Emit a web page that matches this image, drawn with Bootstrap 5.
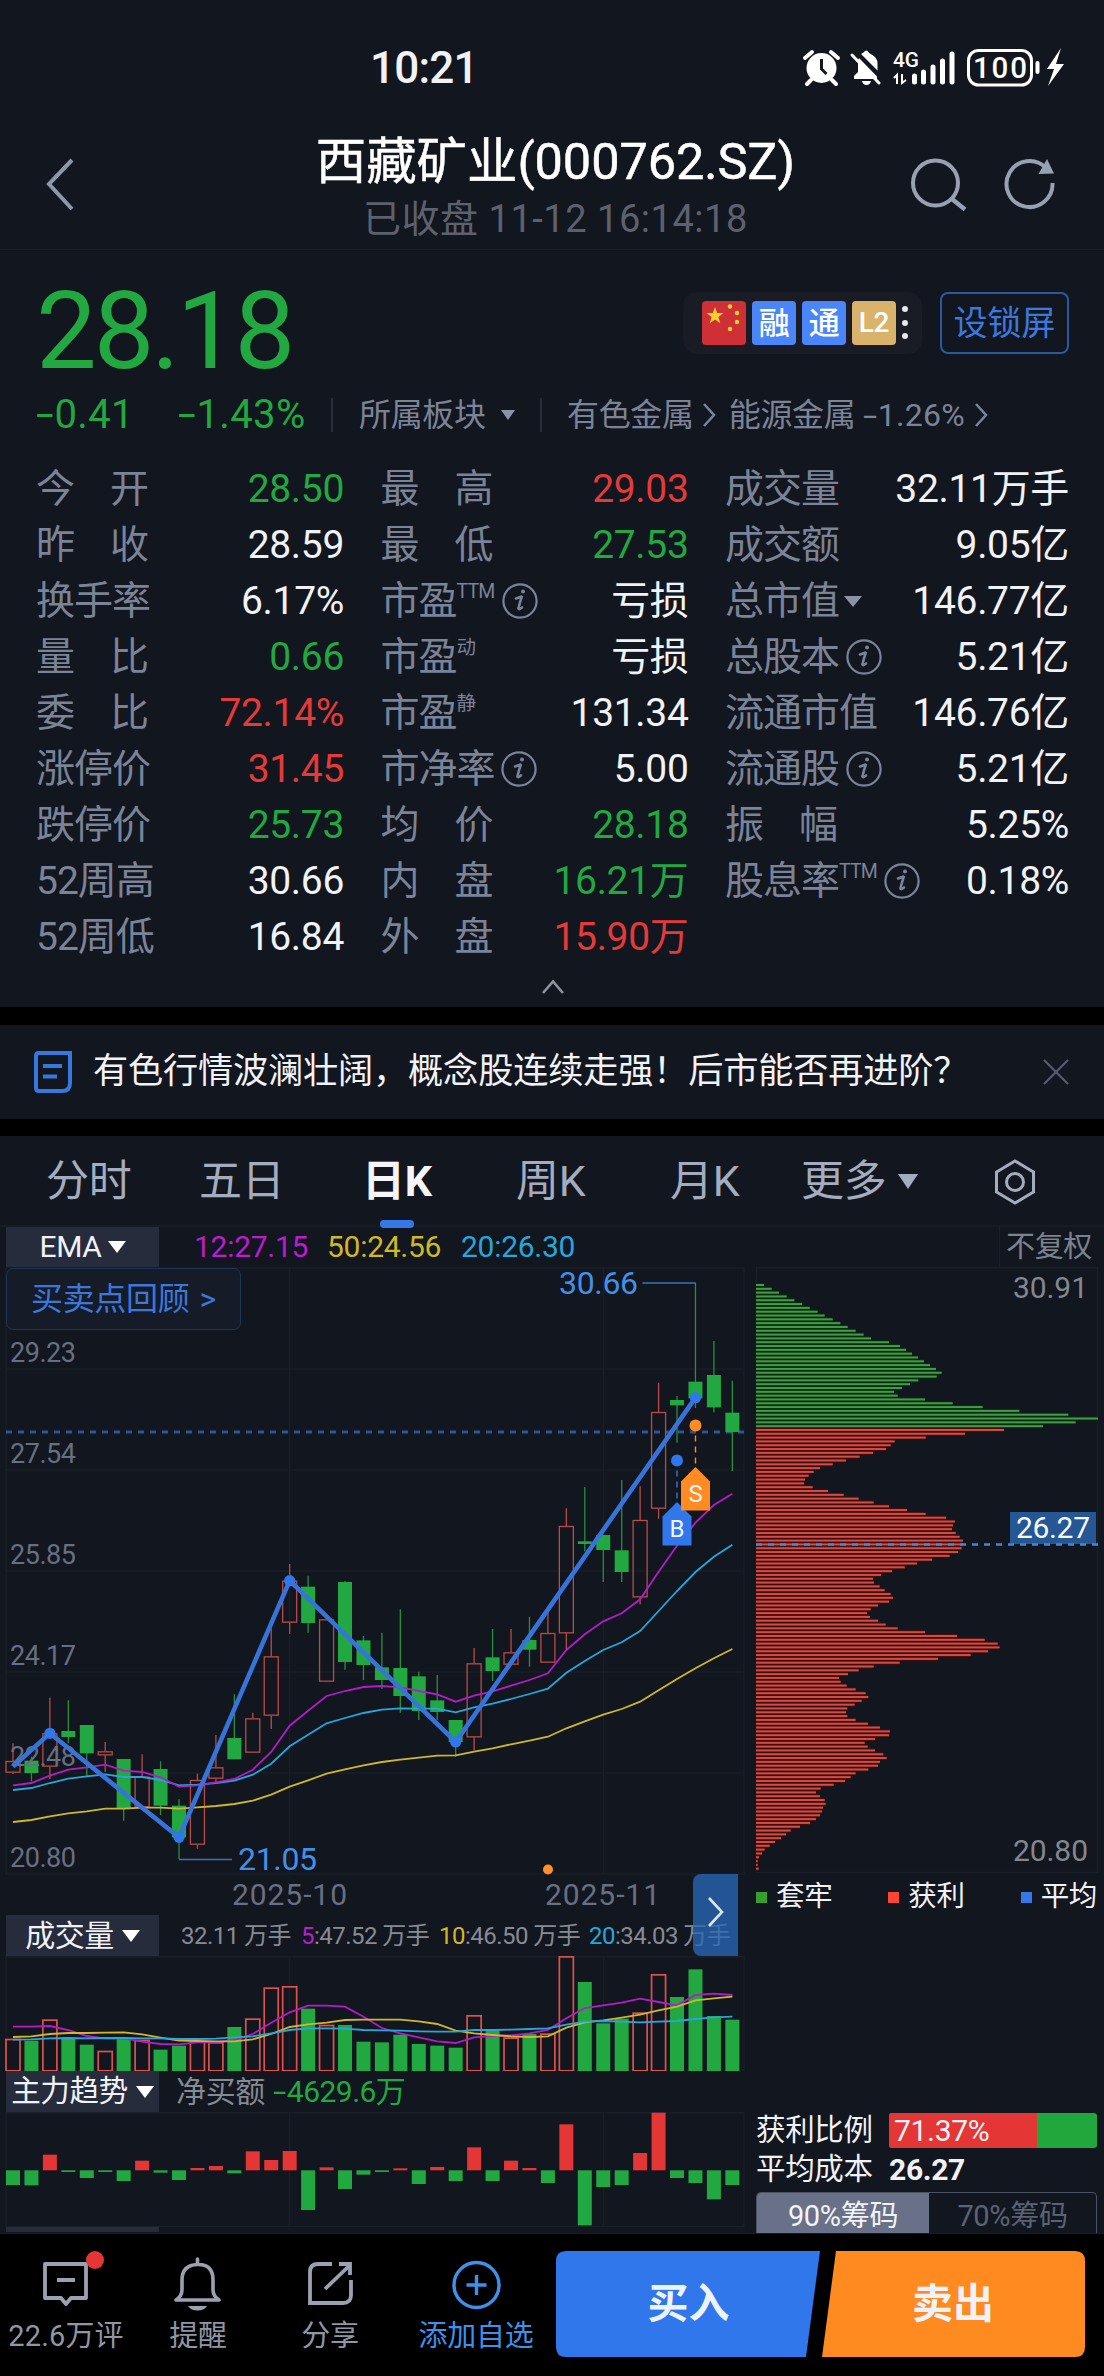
<!DOCTYPE html>
<html lang="zh-CN" data-bs-theme="dark">
<head>
<meta charset="utf-8">
<meta name="viewport" content="width=device-width, initial-scale=1">
<title>西藏矿业(000762.SZ)</title>
<link href="https://cdn.jsdelivr.net/npm/bootstrap@5.3.0/dist/css/bootstrap.min.css" rel="stylesheet">
<style>
:root{--panel:#12161e;--up:#e43a39;--down:#22a840;--lab:#7b8398;--dim:#646b7d;--blue:#3478e8;--line:#1b1f28}
body{width:1104px;height:2376px;overflow:hidden;background:#000;color:#f1f2f6;font-family:Roboto,"Noto Sans CJK SC",sans-serif;line-height:1;letter-spacing:-.02em;white-space:nowrap}
svg{display:block;flex:none}
svg text{letter-spacing:0}
.panel{background:var(--panel)}
.up{color:var(--up)}.down{color:var(--down)}.lab{color:var(--lab)}.dim{color:var(--dim)}
.neg{display:inline-block;width:.46em;transform:scaleX(1.6);transform-origin:0 50%}
.statusbar{height:136px;padding:0 39px 0 370px}
.clock{font-size:44px;font-weight:500;width:435px;letter-spacing:-.018em}
.titlebar{height:114px;border-bottom:1px solid #1b1f27;padding:0 49px 16px 46px}
.titlebar .name{font-size:50.5px;font-weight:400;-webkit-text-stroke:.5px #fff;letter-spacing:-.002em;color:#fff}
.titlebar .time{font-size:38px;color:#5d616d;letter-spacing:.014em;margin-top:13px}
.price{font-size:108px;letter-spacing:-.028em;line-height:78px}
.tagbox{height:62px;width:239px;border-radius:14px;background:#191c24;padding-left:19px;gap:6px}
.tagico{width:44px;height:44px;border-radius:4px;font-size:31px;color:#fff;background:#4a86f7}
.lockbtn{width:129px;height:62px;border:2px solid #2b589e;border-radius:8px;color:#3b79de;font-size:34px;padding:0;letter-spacing:0}
.vr2{width:2px;height:34px;background:#282d3a}
.quotes{display:grid;grid-template-columns:308px 308px 344px;column-gap:36.5px;grid-auto-rows:56px;font-size:39px;height:504px;margin-top:17px}
.quotes>div{display:flex;align-items:center;justify-content:space-between}
.quotes .lab{display:flex;align-items:center;letter-spacing:-.026em}
.quotes .wide{width:112px;justify-content:space-between}
.quotes .tiny{font-size:19.5px;align-self:flex-start;letter-spacing:-.04em;margin-left:0}
.info-i{margin-left:7px}
.news{height:94px;margin:18px 0 17px;padding:0 35px 0 34px;font-size:35.2px;letter-spacing:-.005em}
.ktabs{height:91px;font-size:43px;color:#a4acbf;border-bottom:2px solid #171b24;padding-top:2px}
.ktabs span{position:relative}
.ktabs .on{color:#f4f5f9;font-weight:700}
.ktabs .on::after{content:"";position:absolute;left:18px;bottom:-25px;width:34px;height:8px;border-radius:4px;background:var(--blue)}
.selbox{width:153px;height:41px;background:#262c3c;gap:8px;margin-left:6px}
.leftcol{width:750px}.rightcol{width:354px;padding-left:6px}
.review{position:absolute;left:6px;top:1px;width:235px;height:62px;border:1px solid #1b3558;border-radius:7px;background:#161c27;color:#3c77d9;font-size:32px;padding-left:24px;gap:10px;letter-spacing:-.01em}
.pager{position:absolute;left:693px;top:607px;width:45px;height:82px;border-radius:8px 0 0 8px;background:rgba(40,104,182,.78)}
.legend i{width:11px;height:11px;margin-right:9px}
.ratio{width:208px;height:35px;background:#20a83c;border-radius:3px;overflow:hidden;font-size:30px}
.ratio>div{background:#e53636;padding-left:5px}
.seg{height:41px;width:341px;border:1px solid #4b5263;border-bottom:0;border-radius:5px 5px 0 0;font-size:29px;color:#5b6276;overflow:hidden}
.seg .act{background:#697188;color:#f3f4f8;width:172px}
.dock{height:143px;border-top:1px solid #1c1c1f;font-size:29px;color:#9096a5}
.dock .item{height:142px;display:flex;flex-direction:column;align-items:center;justify-content:flex-start;padding-top:23px;gap:11px}
.dock .item span{letter-spacing:-.01em}
.trade{font-size:41px;font-weight:700;color:#eef3fb;height:106px;letter-spacing:0}
</style>
<script src="https://cdn.jsdelivr.net/npm/bootstrap@5.3.0/dist/js/bootstrap.bundle.min.js"></script>
</head>
<body>
<svg width="0" height="0" class="position-absolute">
  <symbol id="info" viewBox="0 0 36 36"><circle cx="18" cy="18" r="16.6" fill="none" stroke="#7b8398" stroke-width="2.2"/><path d="M14 15.5q5-1.500 6-2.500-2 6-3.500 12-.3 2.500 3.500-.5" fill="none" stroke="#7b8398" stroke-width="2.600" stroke-linecap="round"/><circle cx="21" cy="8.500" r="2" fill="#7b8398"/></symbol>
</svg>

<header class="panel">
  <div class="statusbar d-flex align-items-center">
    <span class="clock">10:21</span>
    <svg width="264" height="40" viewBox="800 48 264 40" fill="#fff">
      <circle cx="820.500" cy="68" r="15"/><path d="M820.500 59v10l5 5" stroke="#12161e" stroke-width="3" fill="none"/><path d="M804 58l7-6M830 52l7 6M810 80l-4 4M831 80l4 4" stroke="#fff" stroke-width="4" stroke-linecap="round"/>
      <path d="M853 79v-3l4-4V62q0-2 1-4l18 18.500V79zM860 54q3-1.500 4-3 1-1 2.500 0 1.500 2.500 4 3.500 6 3 6 9v7zM861 81h9q-1 4-4.500 4t-4.500-4z"/><path d="M851 55l27 28" stroke="#fff" stroke-width="3" stroke-linecap="round"/>
      <text x="892" y="67" font-size="20" font-weight="500" textLength="26" lengthAdjust="spacingAndGlyphs">4G</text>
      <path d="M896 84v-9l-3 3M901 74v9l4-3" stroke="#fff" stroke-width="2" fill="none"/>
      <path d="M913.500 76v6M922.500 72v10M932 67v15M941.500 61v21M951 54v28" stroke="#fff" stroke-width="5" stroke-linecap="round"/>
      <rect x="967.500" y="50.500" width="63" height="34.500" rx="10" fill="none" stroke="#fff" stroke-width="3"/>
      <text x="972" y="78" font-size="29.500" font-weight="500" textLength="54">100</text>
      <path d="M1036.500 63v9" stroke="#fff" stroke-width="4" stroke-linecap="round"/>
      <path d="M1060 48l-14 21h7l-6 17 16-22h-8z"/>
    </svg>
  </div>
  <div class="titlebar d-flex align-items-center">
    <svg width="30" height="54" viewBox="0 0 30 54" class="me-auto"><path d="M26 2L3 26l23 25" fill="none" stroke="#8d97ab" stroke-width="4"/></svg>
    <div class="text-center" style="margin:6px 115px 0 0"><div class="name">西藏矿业(000762.SZ)</div><div class="time">已收盘 11-12 16:14:18</div></div>
    <svg width="58" height="54" viewBox="910 158 58 54"><circle cx="935.500" cy="183" r="22.500" fill="none" stroke="#98a1b3" stroke-width="4"/><path d="M952 199l13 10.500" stroke="#98a1b3" stroke-width="4.500"/></svg>
    <svg width="53" height="54" viewBox="1001 158 53 54" style="margin-left:34px"><path d="M1045 168A23 23 0 1 0 1051.500 183" fill="none" stroke="#98a1b3" stroke-width="4"/><path d="M1046 159l7 14.500-15.500.5z" fill="#98a1b3"/></svg>
  </div>

  <section style="padding:42px 35px 0 36px">
    <div class="d-flex" style="height:78px">
      <div class="price down me-auto">28.18</div>
      <div class="tagbox d-flex align-items-center">
        <svg class="tagico" style="background:#cf3036" viewBox="0 0 44 44" fill="#f7d22d"><path d="M13 6l2.200 6h6.200l-5 4 1.900 6.200L13 18.600l-5.300 3.600L9.600 16l-5-4h6.200z"/><circle cx="28" cy="5.500" r="2.200"/><circle cx="35" cy="12" r="2.200"/><circle cx="35" cy="21" r="2.200"/><circle cx="28" cy="28" r="2.200"/></svg>
        <div class="tagico d-flex align-items-center justify-content-center fw-medium">融</div>
        <div class="tagico d-flex align-items-center justify-content-center fw-medium">通</div>
        <div class="tagico d-flex align-items-center justify-content-center" style="background:#dab36b;font-size:28px;font-weight:500">L2</div>
        <svg width="8" height="36" viewBox="0 0 8 36" fill="#e8e8ea"><circle cx="3" cy="4" r="3"/><circle cx="3" cy="18" r="3"/><circle cx="3" cy="31" r="3"/></svg>
      </div>
      <button class="btn lockbtn d-flex align-items-center justify-content-center" style="margin-left:18px">设锁屏</button>
    </div>
    <div class="d-flex align-items-center lab" style="height:58px;margin-top:16px;font-size:32px">
      <span class="down" style="font-size:40px;width:142px;letter-spacing:.01em"><span class="neg">-</span>0.41</span><span class="down" style="font-size:40px;width:153px;letter-spacing:.01em"><span class="neg">-</span>1.43%</span>
      <span class="vr2"></span><span style="margin-left:26px;width:142px">所属板块</span>
      <svg width="14" height="10"><path d="M0 0h14L7 10z" fill="#8b93a6"/></svg><span class="vr2" style="margin:0 25px 0 25px"></span>
      <span>有色金属</span><svg width="14" height="26" style="margin:0 12px 0 9px"><path d="M1 2l10 11L1 24" fill="none" stroke="#7b8398" stroke-width="2.500"/></svg>
      <span>能源金属 <span style="letter-spacing:.008em"><span class="neg">-</span>1.26%</span></span><svg width="14" height="26" style="margin-left:10px"><path d="M1 2l10 11L1 24" fill="none" stroke="#7b8398" stroke-width="2.500"/></svg>
    </div>
    <div class="quotes">
      <div><span class="lab wide"><b class="fw-normal">今</b><b class="fw-normal">开</b></span><span class="down">28.50</span></div>
      <div><span class="lab wide"><b class="fw-normal">最</b><b class="fw-normal">高</b></span><span class="up">29.03</span></div>
      <div><span class="lab">成交量</span><span>32.11万手</span></div>
      <div><span class="lab wide"><b class="fw-normal">昨</b><b class="fw-normal">收</b></span><span>28.59</span></div>
      <div><span class="lab wide"><b class="fw-normal">最</b><b class="fw-normal">低</b></span><span class="down">27.53</span></div>
      <div><span class="lab">成交额</span><span>9.05亿</span></div>
      <div><span class="lab">换手率</span><span>6.17%</span></div>
      <div><span class="lab">市盈<span class="tiny">TTM</span><svg class="info-i" width="36" height="36"><use href="#info"/></svg></span><span>亏损</span></div>
      <div><span class="lab">总市值<svg width="18" height="11" style="margin-left:5px"><path d="M0 0h18L9 11z" fill="#8b93a6"/></svg></span><span>146.77亿</span></div>
      <div><span class="lab wide"><b class="fw-normal">量</b><b class="fw-normal">比</b></span><span class="down">0.66</span></div>
      <div><span class="lab">市盈<span class="tiny">动</span></span><span>亏损</span></div>
      <div><span class="lab">总股本<svg class="info-i" width="36" height="36"><use href="#info"/></svg></span><span>5.21亿</span></div>
      <div><span class="lab wide"><b class="fw-normal">委</b><b class="fw-normal">比</b></span><span class="up">72.14%</span></div>
      <div><span class="lab">市盈<span class="tiny">静</span></span><span>131.34</span></div>
      <div><span class="lab">流通市值</span><span>146.76亿</span></div>
      <div><span class="lab">涨停价</span><span class="up">31.45</span></div>
      <div><span class="lab">市净率<svg class="info-i" width="36" height="36"><use href="#info"/></svg></span><span>5.00</span></div>
      <div><span class="lab">流通股<svg class="info-i" width="36" height="36"><use href="#info"/></svg></span><span>5.21亿</span></div>
      <div><span class="lab">跌停价</span><span class="down">25.73</span></div>
      <div><span class="lab wide"><b class="fw-normal">均</b><b class="fw-normal">价</b></span><span class="down">28.18</span></div>
      <div><span class="lab wide"><b class="fw-normal">振</b><b class="fw-normal">幅</b></span><span>5.25%</span></div>
      <div><span class="lab">52周高</span><span>30.66</span></div>
      <div><span class="lab wide"><b class="fw-normal">内</b><b class="fw-normal">盘</b></span><span class="down">16.21万</span></div>
      <div><span class="lab">股息率<span class="tiny">TTM</span><svg class="info-i" width="36" height="36"><use href="#info"/></svg></span><span>0.18%</span></div>
      <div><span class="lab">52周低</span><span>16.84</span></div>
      <div><span class="lab wide"><b class="fw-normal">外</b><b class="fw-normal">盘</b></span><span class="up">15.90万</span></div>
    </div>
    <div class="d-flex justify-content-center" style="height:42px;padding-top:14px"><svg width="24" height="16"><path d="M2 14L12 2.500 22 14" fill="none" stroke="#8e939f" stroke-width="2.600"/></svg></div>
  </section>
</header>

<section class="panel news d-flex align-items-center">
  <svg width="38" height="43" viewBox="0 0 38 43" fill="none" stroke="#3478e0" stroke-width="4"><path d="M5 2h31v30q0 8-8 8H5q-3 0-3-3V5q0-3 3-3z"/><path d="M9 15h19M9 25.500h14"/></svg>
  <span style="margin-left:21px">有色行情波澜壮阔，概念股连续走强！后市能否再进阶？</span>
  <svg class="ms-auto" width="26" height="26"><path d="M1 1l24 24M25 1L1 25" stroke="#565d6f" stroke-width="2.200"/></svg>
</section>

<main class="panel" style="height:1097px">
  <nav class="ktabs d-flex align-items-center">
    <span style="margin-left:46px;width:153px">分时</span><span style="width:163px">五日</span><span class="on" style="width:154px">日K</span><span style="width:154px">周K</span><span style="width:131px">月K</span><span>更多</span>
    <svg width="20" height="15" style="margin-left:12px"><path d="M0 0h20L10 15z" fill="#a4acbf"/></svg>
    <svg width="42" height="46" viewBox="0 0 42 46" style="margin-left:76px" fill="none" stroke="#a4acbf" stroke-width="3"><path d="M21 2l18.500 11v20L21 44 2.500 33V13z"/><circle cx="21" cy="23" r="8.500"/></svg>
  </nav>
  <div class="d-flex align-items-center" style="height:40px;font-size:30px">
    <div class="selbox d-flex align-items-center justify-content-center" style="height:40px;padding-left:0;gap:6px">EMA<svg width="18" height="12"><path d="M0 0h18L9 12z" fill="#fff"/></svg></div>
    <span style="margin-left:35px;width:133px;color:#bd1bd0;letter-spacing:-.009em">12:27.15</span><span style="width:134px;color:#d0b827;letter-spacing:-.009em">50:24.56</span><span style="color:#27a6dd;letter-spacing:-.009em">20:26.30</span>
    <span class="ms-auto d-flex align-items-center h-100" style="margin-right:12px;padding-left:6px;border-left:1px solid var(--line);font-size:29px;color:#7d828f">不复权</span>
  </div>
  <div class="d-flex">
    <div class="leftcol position-relative">
      <svg id="kline" class="overflow-visible" width="750" height="648" viewBox="0 1267 750 648"></svg>
      <div class="review d-flex align-items-center"><span>买卖点回顾</span><span>&gt;</span></div>
      <div class="d-flex align-items-center" style="height:41px;font-size:24px;color:#878b94;letter-spacing:-.022em">
        <div class="selbox d-flex align-items-center justify-content-center" style="font-size:30px;color:#f1f2f6;">成交量<svg width="18" height="12"><path d="M0 0h18L9 12z" fill="#fff"/></svg></div>
        <span style="margin-left:22px;width:120px">32.11 万手</span><span style="width:138px"><span style="color:#bd1bd0">5</span>:47.52 万手</span><span style="width:150px"><span style="color:#d0b827">10</span>:46.50 万手</span><span><span style="color:#27a6dd">20</span>:34.03 万手</span>
      </div>
      <svg id="volume" width="750" height="115" viewBox="0 1956 750 115"></svg>
      <div class="d-flex align-items-center" style="height:41px;font-size:30px">
        <div class="selbox d-flex align-items-center justify-content-center" style="font-size:29.500px">主力趋势<svg width="18" height="12"><path d="M0 0h18L9 12z" fill="#fff"/></svg></div>
        <span style="margin-left:17px;color:#858a94;margin-right:8px">净买额</span><span class="down" style="letter-spacing:-.018em"><span class="neg">-</span>4629.6万</span>
      </div>
      <svg id="flow" width="750" height="115" viewBox="0 2112 750 115"></svg>
      <div class="selbox" style="height:5px"></div>
      <div class="pager d-flex align-items-center justify-content-center" style="padding-bottom:6px"><svg width="18" height="30"><path d="M2 1l13 14L2 29" fill="none" stroke="#dbe6f5" stroke-width="2.600"/></svg></div>
    </div>
    <div class="rightcol">
      <svg id="chips" width="348" height="606" viewBox="756 1267 348 606"></svg>
      <div class="legend d-flex justify-content-between align-items-center" style="height:48px;width:341px;font-size:28.500px">
        <span class="d-flex align-items-center"><i style="background:#35a030"></i>套牢</span><span class="d-flex align-items-center"><i style="background:#ff4433"></i>获利</span><span class="d-flex align-items-center"><i style="background:#3478e8"></i>平均</span>
      </div>
      <div style="height:192px"></div>
      <div class="d-flex align-items-center" style="height:35px;font-size:29.500px"><span style="width:133px">获利比例</span><div class="ratio d-flex"><div class="d-flex align-items-center" style="width:71.37%">71.37%</div></div></div>
      <div class="d-flex align-items-center" style="height:44px;font-size:29.500px"><span style="width:133px">平均成本</span><b style="font-size:30px">26.27</b></div>
      <div class="seg d-flex"><div class="act d-flex align-items-center justify-content-center" style="padding-top:6px">90%筹码</div><div class="flex-fill d-flex align-items-center justify-content-center" style="padding-top:6px">70%筹码</div></div>
    </div>
  </div>
</main>

<footer class="dock d-flex">
  <div class="item" style="width:132px"><svg width="78" height="54" viewBox="27 2257 78 54" class="overflow-visible"><path d="M45 2264h41v34H71l-5 6-5-6H45zM57 2280h18" fill="none" stroke="#9aa1b1" stroke-width="3.800" stroke-linejoin="round"/><circle cx="95" cy="2260" r="9" fill="#e53535"/></svg><span style="letter-spacing:.005em">22.6万评</span></div>
  <div class="item" style="width:132px"><svg width="52" height="54" viewBox="172 2257 52 54"><path d="M197.500 2259v5M176 2300q6-4 6-10v-10q0-15 15.500-15.500T213 2280v10q0 6 6 10z" fill="none" stroke="#9aa1b1" stroke-width="3.600" stroke-linecap="round" stroke-linejoin="round"/><path d="M188 2306h19q-3 4.500-9.500 4.500T188 2306z" fill="#9aa1b1"/></svg><span>提醒</span></div>
  <div class="item" style="width:132px"><svg width="50" height="54" viewBox="304 2257 50 54"><path d="M331 2264h-14q-8 0-8 8v31h33q8 0 8-8v-15M338 2264h11v11M349 2265l-25 24" fill="none" stroke="#9aa1b1" stroke-width="3.800"/></svg><span>分享</span></div>
  <div class="item" style="width:160px;color:#3f90ea"><svg width="52" height="54" viewBox="449 2257 52 54" fill="none" stroke="#3f90ea" stroke-width="3.400"><circle cx="475.500" cy="2285" r="22.500"/><path d="M475.500 2275v20M465.500 2285h20"/></svg><span>添加自选</span></div>
  <div class="position-relative" style="margin-top:17px">
    <svg width="548" height="106" viewBox="556 2251 548 106"><path d="M566 2251H820l-14 106H566q-10 0-10-10v-86q0-10 10-10z" fill="#2f77ea"/><path d="M836 2251h239q10 0 10 10v86q0 10-10 10H822z" fill="#ff8a20"/></svg>
    <div class="trade position-absolute top-0 start-0 d-flex align-items-center"><span class="text-center" style="width:265px">买入</span><span class="text-center" style="width:264px">卖出</span></div>
  </div>
</footer>

<script>
const X0=13, STEP=18.445, UP='#b84c49', DN='#22a840', xs=i=>X0+STEP*i;
const kY=v=>1560+v/3, vY=v=>1890+v/3;
const grid=(x1,x2,top,bot,rows,cols)=>rows.map(y=>`<path d="M${x1} ${y}H${x2}"/>`).join('')+cols.map(x=>`<path d="M${x} ${top}V${bot}"/>`).join('');
const lineOf=(a,f,c,w)=>`<polyline fill="none" stroke="${c}" stroke-width="${w}" points="${a.map((v,i)=>xs(i).toFixed(1)+','+f(v).toFixed(1)).join(' ')}"/>`;
const label=(x,y,s,t,c,w,a='')=>`<text x="${x}" y="${y}" font-size="${s}" fill="${c}" ${w?`textLength="${w}"`:''} ${a}>${t}</text>`;

/* candles: type, high, body top, body bottom, low */
const candles=`R550,603,638,642 G590,602,639,664 R413,520,620,657 G421,513,531,550 G495,495,580,650 R546,574,586,636 G597,597,745,782 R583,650,742,742 G604,627,737,765 G718,737,832,898 R641,660,854,866 R525,622,656,665 G403,534,598,598 R458,475,578,578 R205,289,467,507 R12,62,188,222 G47,80,189,218 R178,178,365,365 G63,66,306,329 G228,241,315,360 G218,322,360,387 G148,324,408,458 G335,349,453,480 G345,421,456,480 G480,480,546,590 R264,310,532,571 G207,292,333,363 R207,277,314,314 G171,240,269,320 R150,219,308,308 R-155,-102,220,268 G-219,-56,-48,-26 G-75,-75,-30,66 G-240,-29,36,66 R-221,-120,112,133 R-532,-444,-154,-124 G-492,-480,-464,-352 G-832,-535,-485,-456 G-657,-555,-458,-443 G-538,-442,-384,-267`.split(' ');
const ema12=[676,669,647,629,622,614,632,636,652,680,676,667,657,629,576,497,452,408,393,381,378,382,393,403,425,407,394,377,360,340,270,223,184,160,118,35,-43,-112,-165,-199];
const ema20=[690,684,669,656,649,643,651,651,660,676,674,669,662,644,611,559,524,490,474,459,449,445,446,446,457,442,431,417,402,386,338,303,270,247,213,153,93,36,-10,-46];
const ema50=[786,780,769,760,754,746,746,743,743,746,742,738,732,722,704,680,661,641,628,616,606,599,593,587,586,575,565,553,542,530,505,484,464,447,425,391,357,325,295,267];
let k='<g stroke="#1a1e27" stroke-width="1.500">'+grid(6,744,1268,1874,[1268,1369,1470,1571,1672,1773,1874],[6,289.5,603.5,744])+'</g>';
k+='<path d="M6 1432H744" stroke="#2a5596" stroke-width="3" stroke-dasharray="6 6"/>';
k+=candles.map((c,i)=>{const [h,t,b,l]=c.slice(1).split(',').map(v=>kY(+v)),x=xs(i);
  return c[0]=='R'?`<path d="M${x} ${h}V${t}M${x} ${b}V${l}" stroke="${UP}" stroke-width="1.300"/><rect x="${x-7}" y="${t+.5}" width="14" height="${b-t-1}" fill="none" stroke="${UP}" stroke-width="1.300"/>`
  :`<path d="M${x} ${h}V${l}" stroke="#259040" stroke-width="1.300"/><rect x="${x-7}" y="${t}" width="14" height="${b-t}" fill="${DN}"/>`}).join('');
k+=lineOf(ema50,kY,'#cdb731',1.8)+lineOf(ema20,kY,'#27a6dd',1.8)+lineOf(ema12,kY,'#b41cc8',1.8);
[['29.23',1362],['27.54',1463],['25.85',1564],['24.17',1665],['22.48',1766],['20.80',1867]].forEach(a=>k+=label(10,a[1],27,a[0],'#686f82',66));
const zig=[[0,620],[2,520],[9,832],[15,62],[24,546],[37,-487]];
k+=`<polyline fill="none" stroke="#3674dc" stroke-width="4.600" points="${zig.map(p=>xs(p[0])+','+kY(p[1])).join(' ')}"/>`+zig.slice(1).map(p=>`<circle cx="${xs(p[0])}" cy="${kY(p[1])}" r="5.600" fill="#2f77ea"/>`).join('');
k+='<path d="M179 1859.500H232M642.500 1283H695.500" stroke="#3a74b8" stroke-width="1.500"/>'+label(238,1870,32,'21.05','#4390e8',79)+label(559,1294,32,'30.66','#4390e8',79);
k+=label(232,1905,30,'2025-10','#686f82',115)+label(545,1905,30,'2025-11','#686f82',115)+'<circle cx="548" cy="1869.500" r="5" fill="#ff8f28"/>';
const tag=(x,dot,tip,c,t)=>`<circle cx="${x}" cy="${dot}" r="6" fill="${c}"/><path d="M${x} ${dot+10}V${tip}" stroke="${c}" stroke-width="1.400" stroke-dasharray="6 5"/><path d="M${x} ${tip}l14.500 14.500v29h-29v-29z" fill="${c}"/>`+label(x,tip+35,24,t,'#f3f5fa',0,'text-anchor="middle"');
k+=tag(677,1460.5,1502,'#2f77ea','B')+tag(695.5,1425.5,1467,'#ff8b22','S');
document.getElementById('kline').innerHTML=k;

/* volume bars */
const vols='R447 G452 R389 G447 G464 R483 G447 R450 G479 G467 R455 R457 G411 R386 R293 R289 G356 R405 G405 G455 G457 G434 G462 G467 G473 R376 G420 R443 G432 R431 R199 G276 G400 G386 R368 R253 G321 G238 G378 G389'.split(' ');
const v5=[410,410,408,420,438,446,445,455,462,463,457,457,450,432,398,367,347,347,350,380,414,430,442,454,459,442,438,436,430,420,385,354,346,338,326,336,346,315,311,315];
const v10=[441,439,432,429,429,428,427,433,443,452,453,454,454,448,432,411,403,398,390,389,389,389,394,402,422,430,435,439,441,439,413,397,391,383,374,361,350,331,325,320];
const v20=[449,448,445,444,445,444,444,445,445,447,447,446,442,439,430,420,415,415,416,420,421,422,424,425,425,420,420,419,417,415,404,395,393,395,397,395,393,387,382,380];
document.getElementById('volume').innerHTML='<g stroke="#1a1e27" stroke-width="1.500">'+grid(6,744,1956,2071,[1956.7,2070.5],[6,289.5,603.5,744])+'</g>'+vols.map((s,i)=>{const y=vY(+s.slice(1)),x=xs(i);
  return s[0]=='R'?`<rect x="${x-7}" y="${y+.5}" width="14" height="${2070.3-y}" fill="none" stroke="#dd524e" stroke-width="1.700"/>`:`<rect x="${x-7}" y="${y}" width="14" height="${2071-y}" fill="${DN}"/>`}).join('')+lineOf(v5,vY,'#b41cc8',1.8)+lineOf(v10,vY,'#cdb731',1.8)+lineOf(v20,vY,'#27a6dd',1.8);

/* main-force net buying */
const flow=[885,886,794,846,864,846,873,812,848,870,834,828,850,784,810,783,960,832,897,854,846,835,882,831,873,772,873,812,834,879,703,1006,891,885,789,668,864,879,928,885];
document.getElementById('flow').innerHTML='<g stroke="#1a1e27" stroke-width="1.500">'+grid(6,744,2112,2227,[2112.7,2226.5],[6,289.5,603.5,744])+'</g>'+flow.map((v,i)=>{const y=vY(v),z=2170.3;return `<rect x="${xs(i)-7}" y="${Math.min(y,z)}" width="14" height="${Math.abs(y-z)}" fill="${v<841?'#e53636':DN}"/>`}).join('');

/* cost distribution */
const chips=[72,95,117,140,163,186,209,233,254,278,301,323,347,371,393,447,480,498,516,534,552,570,588,605,590,535,510,486,462,473,555,638,728,838,985,1074,1007,909,792,675,557,464,452,438,399,359,318,278,240,221,206,195,192,218,264,311,356,401,447,501,557,618,645,639,636,647,659,669,669,665,654,629,576,531,494,456,423,399,402,419,434,452,459,447,414,392,381,390,414,437,473,555,651,734,773,779,744,692,594,479,401,356,324,297,302,320,347,377,385,365,344,322,318,322,347,384,420,450,447,405,374,383,405,430,440,420,414,385,347,332,315,281,242,228,240,254,257,249,246,240,228,210,180,152,138,123,105,89,74,66,57,53,53,56];
const pitch=(1868.7-1285)/(chips.length-1);
document.getElementById('chips').innerHTML='<g stroke="#1a1e27" stroke-width="1.500">'+grid(756,1097.5,1267,1872,[1267.7,1872.5],[756.5,1097.5])+'</g>'+chips.map((v,i)=>{const y=1285+i*pitch,w=(v-48)/3,g=i<38;return `<rect x="756" y="${y-1.9}" width="${w}" height="${pitch}" fill="${g?'#06310c':'#4a0c0c'}"/><rect x="756" y="${y-1}" width="${w}" height="2" fill="${g?'#459a4a':'#cf4f46'}"/>`}).join('')+label(1013,1298,30,'30.91','#83878f',75)+label(1013,1861,30,'20.80','#83878f',75)+'<rect x="1010" y="1512" width="86" height="32" fill="#255795"/><path d="M756 1544.500H1098" stroke="#4a86d6" stroke-width="2.600" stroke-dasharray="6 6"/>'+label(1016,1538,30,'26.27','#f5f8fc',74);
</script>
</body>
</html>
